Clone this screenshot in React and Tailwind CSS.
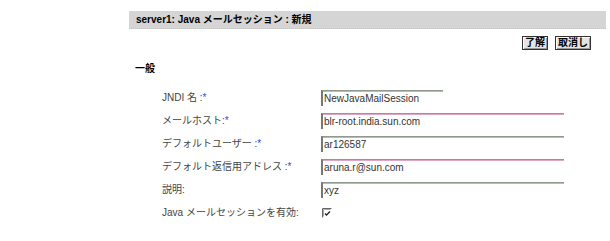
import React from 'react';

const font = { fontFamily: '"Liberation Sans", "Noto Sans CJK JP", sans-serif' };

// field rows for the mail session form
const fields = [
  { label: 'JNDI 名 :', req: true, value: 'NewJavaMailSession', w: 'w-[122px]' },
  { label: 'メールホスト:', req: true, value: 'blr-root.india.sun.com', w: 'w-[243px]' },
  { label: 'デフォルトユーザー :', req: true, value: 'ar126587', w: 'w-[243px]' },
  { label: 'デフォルト返信用アドレス :', req: true, value: 'aruna.r@sun.com', w: 'w-[243px]' },
  { label: '説明:', req: false, value: 'xyz', w: 'w-[243px]' },
];

const Btn = ({ children }) => (
  <button className="h-[14px] px-[2px] text-[10px] font-bold leading-[12px] text-black bg-[#e4e4e4] border border-[#333] shadow-[inset_1px_1px_0_#fff,inset_-1px_-1px_0_#999]">
    {children}
  </button>
);

export default function App() {
  return (
    <div className="w-[610px] h-[241px] bg-white text-[#333] overflow-hidden" style={font}>
      {/* title bar */}
      <div className="mt-[11px] ml-[129px] w-[477px] h-[18px] bg-[#d5d5d5] border-b border-dotted border-[#a9cbe9] flex items-center pl-[7px]">
        <span className="text-[10px] font-bold text-black">server1: Java メールセッション : 新規</span>
      </div>

      {/* actions */}
      <div className="flex justify-end gap-[7px] pr-[19px] mt-[7px]">
        <Btn>了解</Btn>
        <Btn>取消し</Btn>
      </div>

      <div className="ml-[135px] mt-[13px] text-[10px] font-bold text-black leading-[12px]">一般</div>

      {/* form */}
      <div className="mt-[11px] ml-[162px] flex flex-col">
        {fields.map((f) => (
          <div key={f.label} className="flex items-center h-[23px]">
            <div className="w-[159px] text-[10px] text-[#444]">
              {f.label}
              {f.req && <span className="text-[#3344ee]">*</span>}
            </div>
            <div
              className={`${f.w} h-[16px] border-t border-l-2 border-t-[#8f9a8c] border-l-[#777] shadow-[inset_0_1px_0_#dca6c4] text-[10px] leading-[14px] text-[#333] pl-[1px] pt-[1px]`}
            >
              {f.value}
            </div>
          </div>
        ))}
        <div className="flex items-center h-[23px]">
          <div className="w-[159px] text-[10px] text-[#444]">Java メールセッションを有効:</div>
          <svg width="10" height="10" viewBox="0 0 10 10" className="ml-[1px]">
            <path d="M0.5 9.5V0.5H9.5" fill="none" stroke="#666" strokeWidth="1" />
            <path d="M1.5 8.5V1.5H8.5" fill="none" stroke="#aaa" strokeWidth="1" />
            <path d="M3 5.5L4.5 7L8 3.5" fill="none" stroke="#222" strokeWidth="1.3" />
          </svg>
        </div>
      </div>
    </div>
  );
}
